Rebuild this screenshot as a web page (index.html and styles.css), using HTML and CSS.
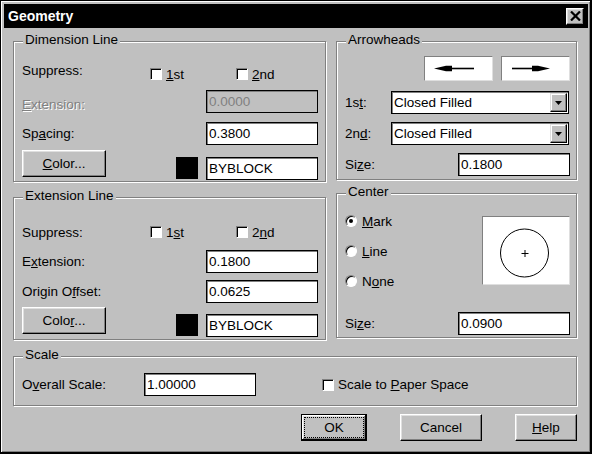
FILE: index.html
```html
<!DOCTYPE html>
<html lang="en">
<head>
<meta charset="utf-8">
<title>Geometry</title>
<link rel="stylesheet" href="styles.css">
</head>
<body>
<div class="dialog">
  <div class="titlebar">
    <span class="title">Geometry</span>
    <button class="close" aria-label="Close">
      <svg width="11" height="10" viewBox="0 0 11 10"><path d="M1 0.5 L10 9.5 M10 0.5 L1 9.5" stroke="#000" stroke-width="2.2" fill="none"/></svg>
    </button>
  </div>

  <div class="content">
    <div class="columns">
      <div class="col col-left">
        <section class="group g-dim">
          <div class="group-title">Dimension Line</div>
          <div class="group-body">
            <div class="row h20">
              <span class="lbl w-sup lift">Suppress:</span>
              <span class="check-item"><span class="check"></span><span><u>1</u>st</span></span>
              <span class="check-item"><span class="check"></span><span><u>2</u>nd</span></span>
            </div>
            <div class="row h23 sp6">
              <span class="lbl w-field disabled drop"><u>E</u>xtension:</span>
              <span class="field is-disabled">0.0000</span>
            </div>
            <div class="row h23 sp9">
              <span class="lbl w-field">Sp<u>a</u>cing:</span>
              <span class="field">0.3800</span>
            </div>
            <div class="row color-row sp5">
              <button class="btn btn-color"><span><u>C</u>olor...</span></button>
              <span class="swatch"></span>
              <span class="field">BYBLOCK</span>
            </div>
          </div>
        </section>

        <section class="group g-ext">
          <div class="group-title">Extension Line</div>
          <div class="group-body">
            <div class="row h20">
              <span class="lbl w-sup">Suppress:</span>
              <span class="check-item"><span class="check"></span><span>1<u>s</u>t</span></span>
              <span class="check-item"><span class="check"></span><span>2<u>n</u>d</span></span>
            </div>
            <div class="row h23 sp8">
              <span class="lbl w-field">E<u>x</u>tension:</span>
              <span class="field">0.1800</span>
            </div>
            <div class="row h23 sp7">
              <span class="lbl w-field">Origin O<u>f</u>fset:</span>
              <span class="field">0.0625</span>
            </div>
            <div class="row color-row sp4">
              <button class="btn btn-color"><span>Colo<u>r</u>...</span></button>
              <span class="swatch"></span>
              <span class="field">BYBLOCK</span>
            </div>
          </div>
        </section>
      </div>

      <div class="col col-right">
        <section class="group g-arrow">
          <div class="group-title">Arrowheads</div>
          <div class="group-body">
            <div class="row arrow-row">
              <span class="arrow-btn">
                <svg width="67" height="23" viewBox="0 0 67 23"><path d="M26 11.5 H49" stroke="#000" stroke-width="1.6"/><polygon points="9,11.5 21,8.8 27,8.8 27,14.2 21,14.2" fill="#000"/></svg>
              </span>
              <span class="arrow-btn">
                <svg width="67" height="23" viewBox="0 0 67 23"><path d="M10 11.5 H31" stroke="#000" stroke-width="1.6"/><polygon points="48,11.5 36,8.8 30,8.8 30,14.2 36,14.2" fill="#000"/></svg>
              </span>
            </div>
            <div class="row h23 sp10">
              <span class="lbl w-arrow">1s<u>t</u>:</span>
              <span class="select">
                <span class="select-text">Closed Filled</span>
                <span class="select-arrow"><svg width="7" height="4" viewBox="0 0 7 4"><polygon points="0,0 7,0 3.5,4" fill="#000"/></svg></span>
              </span>
            </div>
            <div class="row h23 sp8">
              <span class="lbl w-arrow">2n<u>d</u>:</span>
              <span class="select">
                <span class="select-text">Closed Filled</span>
                <span class="select-arrow"><svg width="7" height="4" viewBox="0 0 7 4"><polygon points="0,0 7,0 3.5,4" fill="#000"/></svg></span>
              </span>
            </div>
            <div class="row h23 sp8">
              <span class="lbl w-size">Si<u>z</u>e:</span>
              <span class="field">0.1800</span>
            </div>
          </div>
        </section>

        <section class="group g-center">
          <div class="group-title">Center</div>
          <div class="group-body">
            <div class="center-top">
              <div class="radios">
                <span class="radio-item"><span class="radio on"></span><span><u>M</u>ark</span></span>
                <span class="radio-item"><span class="radio"></span><span><u>L</u>ine</span></span>
                <span class="radio-item"><span class="radio"></span><span>N<u>o</u>ne</span></span>
              </div>
              <div class="preview">
                <svg width="86" height="67" viewBox="0 0 86 67">
                  <circle cx="41.5" cy="36" r="24" stroke="#000" stroke-width="1" fill="none"/>
                  <path d="M38.5 36.5 H45.5 M42 33 V40" stroke="#000" stroke-width="1" fill="none"/>
                </svg>
              </div>
            </div>
            <div class="row h23 sp21">
              <span class="lbl w-size">Si<u>z</u>e:</span>
              <span class="field">0.0900</span>
            </div>
          </div>
        </section>
      </div>
    </div>

    <section class="group g-scale">
      <div class="group-title">Scale</div>
      <div class="group-body">
        <div class="row h23">
          <span class="lbl w-scale">O<u>v</u>erall Scale:</span>
          <span class="field">1.00000</span>
          <span class="check-item paper"><span class="check"></span><span>Scale to <u>P</u>aper Space</span></span>
        </div>
      </div>
    </section>

    <div class="buttons">
      <button class="btn btn-default btn-ok"><span class="focus">OK</span></button>
      <button class="btn btn-cancel"><span>Cancel</span></button>
      <button class="btn btn-help"><span><u>H</u>elp</span></button>
    </div>
  </div>
</div>
</body>
</html>
```

FILE: styles.css
```css
* {
  box-sizing: border-box;
}

html,
body {
  margin: 0;
  padding: 0;
}

body {
  width: 592px;
  height: 454px;
  overflow: hidden;
  background: #c0c0c0;
  font-family: "Liberation Sans", Arial, sans-serif;
  font-size: 13.5px;
  line-height: 15px;
  color: #000;
}

u {
  text-decoration: underline;
  text-underline-offset: 1px;
}

/* window frame */
.dialog {
  width: 592px;
  height: 454px;
  display: flex;
  flex-direction: column;
  background: #c0c0c0;
  border-style: solid;
  border-color: #000;
  border-width: 1px 2px 2px 1px;
  box-shadow: inset 1px 1px 0 #fff, inset -1px -1px 0 #808080;
  padding: 3px 2px 0 3px;
}

.titlebar {
  height: 24px;
  flex: none;
  background: #000;
  display: flex;
  align-items: center;
  justify-content: space-between;
  padding: 0 4px;
}

.title {
  color: #fff;
  font-weight: bold;
  font-size: 14px;
}

.close {
  width: 18px;
  height: 17px;
  padding: 0;
  margin: 0;
  background: #c0c0c0;
  border: 1px solid;
  border-color: #fff #000 #000 #fff;
  box-shadow: inset -1px -1px 0 #808080, inset 1px 1px 0 #dfdfdf;
  display: flex;
  align-items: center;
  justify-content: center;
}

.content {
  flex: 1;
  display: flex;
  flex-direction: column;
  padding: 13px 11px 0 9px;
}

.columns {
  display: flex;
  gap: 10px;
}

.col {
  display: flex;
  flex-direction: column;
}

.col-left {
  width: 313px;
  gap: 15px;
}

.col-right {
  width: 241px;
  gap: 13px;
}

/* group boxes */
.group {
  border: 1px solid #808080;
  box-shadow: inset 1px 1px 0 #fff, 1px 1px 0 #fff;
}

.group-title {
  width: max-content;
  height: 15px;
  margin: -10px 0 0 9px;
  padding: 0 2px;
  background: #c0c0c0;
}

.group-body {
  display: flex;
  flex-direction: column;
  padding: 0 6px 0 8px;
}

.g-dim { height: 141px; }
.g-dim .group-body { padding-top: 17px; }

.g-ext { height: 143px; }
.g-ext .group-body { padding-top: 19px; }

.g-arrow { height: 139px; }
.g-arrow .group-body { padding-top: 9px; }

.g-center { height: 145px; }
.g-center .group-body { padding-top: 12px; }

.g-scale {
  height: 50px;
  margin-top: 16px;
}
.g-scale .group-body { padding-top: 11px; }

/* rows */
.row {
  display: flex;
  align-items: center;
}

.h20 { height: 20px; }
.h23 { height: 23px; }

.sp4 { margin-top: 4px; }
.sp5 { margin-top: 5px; }
.sp6 { margin-top: 6px; }
.sp7 { margin-top: 7px; }
.sp8 { margin-top: 8px; }
.sp9 { margin-top: 9px; }
.sp10 { margin-top: 10px; }
.sp21 { margin-top: 21px; }

.lbl { flex: none; }
.w-sup { width: 128px; }
.w-field { width: 184px; }
.w-arrow { width: 46px; }
.w-size { width: 113px; }
.w-scale { width: 122px; }

.lift { margin-bottom: 7px; }
.drop { margin-top: 6px; }

.disabled {
  color: #808080;
  text-shadow: 1px 1px 0 #fff;
}

/* check boxes */
.check-item {
  display: flex;
  align-items: center;
  width: 86px;
  flex: none;
}

.check {
  width: 12px;
  height: 12px;
  flex: none;
  margin-right: 4px;
  background: #fff;
  border: 1px solid;
  border-color: #808080 #fff #fff #808080;
  box-shadow: inset 1px 1px 0 #000;
}

.paper {
  width: auto;
  margin-left: 66px;
}

/* text fields */
.field {
  width: 112px;
  height: 23px;
  flex: none;
  display: flex;
  align-items: center;
  padding-left: 2px;
  background: #fff;
  border: 1px solid #000;
  box-shadow: inset 1px 1px 0 #808080;
}

.field.is-disabled {
  background: #c0c0c0;
  color: #808080;
}

/* color rows */
.color-row {
  align-items: flex-start;
  height: 30px;
}

.swatch {
  width: 22px;
  height: 22px;
  flex: none;
  background: #000;
  margin: 7px 0 0 70px;
}

.color-row .field {
  margin: 7px 0 0 8px;
}

/* push buttons */
.btn {
  margin: 0;
  padding: 0;
  font: inherit;
  color: #000;
  background: #c0c0c0;
  border: 1px solid;
  border-color: #fff #000 #000 #fff;
  box-shadow: inset -1px -1px 0 #808080, inset 1px 1px 0 #dfdfdf;
  display: flex;
  align-items: center;
  justify-content: center;
}

.btn-color {
  width: 84px;
  height: 27px;
  flex: none;
}

.buttons {
  display: flex;
  justify-content: flex-end;
  gap: 33px;
  margin-top: 8px;
}

.buttons .btn { height: 27px; }
.btn-ok { width: 66px; }
.btn-cancel { width: 82px; }
.btn-help { width: 62px; }

.btn-default {
  border: 1px solid #000;
  box-shadow: inset -1px -1px 0 #000, inset 1px 1px 0 #fff, inset -2px -2px 0 #808080, inset 2px 2px 0 #dfdfdf;
  padding: 2px;
  align-items: stretch;
}

.focus {
  flex: 1;
  display: flex;
  align-items: center;
  justify-content: center;
  border: 1px dotted #000;
}

/* arrowheads */
.arrow-row {
  justify-content: flex-end;
  gap: 8px;
  height: 25px;
}

.arrow-btn {
  width: 69px;
  height: 25px;
  display: block;
  background: #fff;
  border: 1px solid;
  border-color: #808080 #dfdfdf #dfdfdf #808080;
}

.arrow-btn svg { display: block; }

.select {
  width: 178px;
  height: 23px;
  flex: none;
  display: flex;
  align-items: center;
  padding: 1px 1px 1px 2px;
  background: #fff;
  border: 1px solid #000;
  box-shadow: inset 1px 1px 0 #808080;
}

.select-text { flex: 1; }

.select-arrow {
  width: 17px;
  height: 19px;
  flex: none;
  display: flex;
  align-items: center;
  justify-content: center;
  background: #c0c0c0;
  border: 1px solid;
  border-color: #dfdfdf #000 #000 #dfdfdf;
  box-shadow: inset -1px -1px 0 #808080, inset 1px 1px 0 #fff;
}

/* center */
.center-top {
  display: flex;
  align-items: flex-start;
}

.radios {
  display: flex;
  flex-direction: column;
  gap: 10px;
}

.radio-item {
  height: 20px;
  display: flex;
  align-items: center;
}

.radio {
  width: 12px;
  height: 12px;
  flex: none;
  margin-right: 5px;
  border-radius: 50%;
  background: #fff;
  border: 1px solid;
  border-color: #808080 #fff #fff #808080;
  box-shadow: inset 1px 1px 0 #000;
  display: flex;
  align-items: center;
  justify-content: center;
}

.radio.on::after {
  content: "";
  width: 4px;
  height: 4px;
  border-radius: 50%;
  background: #000;
}

.preview {
  width: 88px;
  height: 69px;
  margin: 5px 0 0 auto;
  background: #fff;
  border: 1px solid;
  border-color: #808080 #dfdfdf #dfdfdf #808080;
}

.preview svg { display: block; }
```
